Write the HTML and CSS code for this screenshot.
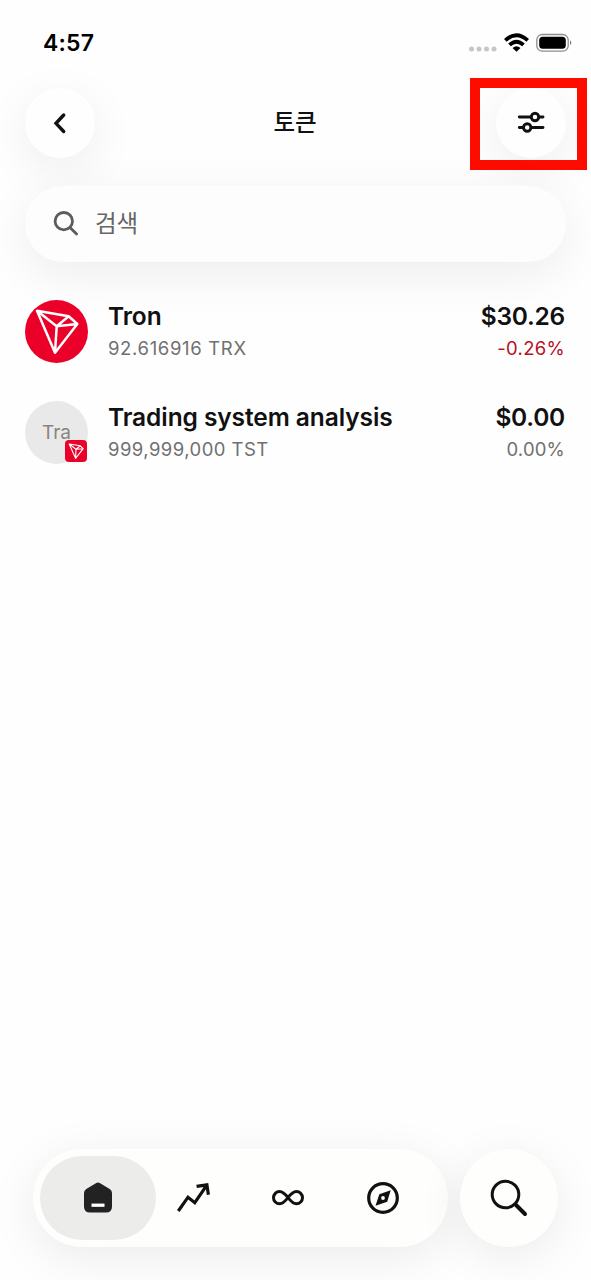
FILE: index.html
```html
<!DOCTYPE html>
<html lang="ko">
<head>
<meta charset="utf-8">
<title>토큰</title>
<link rel="stylesheet" href="styles.css">
</head>
<body>
<svg class="defs" width="0" height="0">
  <symbol id="tron" viewBox="0 0 63 63">
    <path d="M12 10.8 43.7 16.3 52.3 24 30 52.8ZM12 10.8 31.7 26.2 52.3 24M43.7 16.3 31.7 26.2 30 52.8" fill="none" stroke="#fff" stroke-width="2.5" stroke-linejoin="round"/>
  </symbol>
</svg>
<div class="screen">
  <div class="status">
    <span class="time">4:57</span>
    <svg class="status-icons" width="106" height="24" viewBox="0 0 106 24">
      <g fill="#c6c6c6"><circle cx="3.5" cy="18" r="2.5"/><circle cx="11" cy="18" r="2.5"/><circle cx="18.5" cy="18" r="2.5"/><circle cx="26" cy="18" r="2.5"/></g>
      <path d="M37.3 9.4Q48.5-1.100 59.7 9.4M41.5 13.9Q48.5 7.400 55.5 13.9" fill="none" stroke="#000" stroke-width="3.8"/>
      <path d="M44.5 17Q48.5 13.600 52.500 17L48.5 20.700Z"/>
      <rect x="68.800" y="3.500" width="31.400" height="16.700" rx="5.500" fill="none" stroke="#8d8d8d" stroke-width="1.300"/>
      <rect x="71.200" y="5.800" width="26.600" height="12" rx="3.500"/>
      <path d="M102 9.200q2.600 2.500 0 5Z" fill="#777"/>
    </svg>
  </div>
  <header class="header">
    <button class="round"><svg width="70" height="70" viewBox="0 0 70 70"><path d="M38.700 27 31 35.300 38.700 43.500" fill="none" stroke="#111" stroke-width="3.400" stroke-linecap="round"/></svg></button>
    <h1 class="heading">토큰</h1>
    <button class="round"><svg width="70" height="70" viewBox="0 0 70 70"><g fill="none" stroke="#111" stroke-width="2.900" stroke-linecap="round"><path d="M23.300 29h11.500M43.500 29h3.500M23.300 39.500h3.500M35.500 39.500h11.500"/><circle cx="39" cy="29" r="3.700"/><circle cx="31.200" cy="39.500" r="3.700"/></g></svg></button>
    <div class="highlight"></div>
  </header>
  <div class="search">
    <svg width="26" height="26" viewBox="0 0 26 26"><g fill="none" stroke="#5c5c5c" stroke-width="2.800" stroke-linecap="round"><circle cx="10.800" cy="10.200" r="8.700"/><path d="m17.200 16.700 6.400 6.400"/></g></svg>
    <span class="placeholder">검색</span>
  </div>
  <main class="list">
    <div class="row">
      <div class="coin tron"><svg width="63" height="63"><use href="#tron"/></svg></div>
      <div class="info"><div class="name">Tron</div><div class="sub s1">92.616916 TRX</div></div>
      <div class="value"><div class="name">$30.26</div><div class="sub down">-0.26%</div></div>
    </div>
    <div class="row">
      <div class="coin plain"><span class="tra">Tra</span><div class="badge"><svg width="22" height="22" viewBox="0 0 22 22"><path d="M4.200 4 15.300 5.800 18.200 8.700 10.600 18.300ZM4.200 4 11 9.300 18.200 8.700M15.300 5.800 11 9.300 10.600 18.300" fill="none" stroke="#fff" stroke-width="1.100" stroke-linejoin="round"/></svg></div></div>
      <div class="info"><div class="name">Trading system analysis</div><div class="sub s2">999,999,000 TST</div></div>
      <div class="value"><div class="name">$0.00</div><div class="sub flat">0.00%</div></div>
    </div>
  </main>
  <footer class="dock">
    <nav class="tabs">
      <div class="tab active"><svg width="34" height="34" viewBox="0 0 34 34"><path d="M15.300 1.900q1.700-1 3.400 0l10 6.100q2.300 1.500 2.300 4v13.500q0 6-6 6H9q-6 0-6-6V12q0-2.500 2.300-4Z" fill="#222"/><path d="M10.500 24.200h13" stroke="#fff" stroke-width="3.300"/></svg></div>
      <div class="tab"><svg width="36" height="34" viewBox="0 0 36 34"><path d="m3.300 30 9.700-13.800 6.800 5.500L31.500 4.700M21.600 5.300l10.300-1.500 1.500 10" fill="none" stroke="#111" stroke-width="3.200"/></svg></div>
      <div class="tab"><svg width="34" height="34" viewBox="0 0 34 34"><path d="M17 16.700C13.500 12.200 11.500 10.600 8.600 10.600a6.100 6.100 0 0 0 0 12.200C11.500 22.800 13.500 21.200 17 16.700S22.500 10.600 25.400 10.600a6.100 6.100 0 0 1 0 12.200C22.500 22.800 20.500 21.200 17 16.700Z" fill="none" stroke="#111" stroke-width="3"/></svg></div>
      <div class="tab"><svg width="34" height="34" viewBox="0 0 34 34"><circle cx="17" cy="17" r="14.300" fill="none" stroke="#111" stroke-width="3.200"/><path d="m24.700 9.300-3.500 11.500L9.500 24.700l3.800-11.500Z" fill="#111"/><circle cx="17" cy="17" r="1.900" fill="#fff"/></svg></div>
    </nav>
    <button class="find"><svg width="38" height="38" viewBox="0 0 38 38"><g fill="none" stroke="#111" stroke-linecap="round"><circle cx="15.500" cy="15.500" r="13.300" stroke-width="3"/><path d="m26 26 9 9" stroke-width="4"/></g></svg></button>
  </footer>
</div>
</body>
</html>
```
FILE: styles.css
```css
* { box-sizing: border-box; }
body { margin: 0; background: #fefefe; font-family: Inter, "Noto Sans CJK KR", sans-serif; color: #111; }
button { border: 0; padding: 0; }
svg { display: block; }
.defs { position: absolute; }
.screen { width: 591px; height: 1280px; display: flex; flex-direction: column; overflow: hidden; }
.status { height: 88px; padding: 31px 17px 0 43px; display: flex; justify-content: space-between; }
.time { font-size: 23px; font-weight: 600; line-height: 25px; letter-spacing: .2px; color: #000; }
.header { position: relative; height: 70px; padding: 0 25px; display: flex; justify-content: space-between; align-items: center; }
.round { width: 70px; height: 70px; border-radius: 50%; background: #fefefe; box-shadow: 0 12px 48px rgba(0, 0, 0, .07); }
.heading { margin: 0; padding-right: 1px; font-size: 23.5px; font-weight: 500; line-height: 70px; }
.highlight { position: absolute; left: 470px; top: -10px; width: 117px; height: 92px; border: 10px solid #ff0c00; }
.search { position: relative; margin: 28px 25px 0; height: 76px; padding-left: 28px; display: flex; align-items: center; gap: 16px; border-radius: 38px; background: #fdfdfd; box-shadow: 0 12px 48px rgba(0, 0, 0, .07); }
.placeholder { font-size: 23.5px; line-height: 76px; color: #666; }
.list { flex: 1; padding: 37.5px 26px 0 25px; display: flex; flex-direction: column; gap: 38px; }
.row { height: 63px; display: flex; }
.coin { position: relative; width: 63px; height: 63px; border-radius: 50%; flex: none; }
.tron { background: #eb0029; }
.plain { background: #e9e9e9; display: flex; align-items: center; justify-content: center; }
.tra { font-size: 19px; color: #858585; }
.badge { position: absolute; left: 40px; top: 39.5px; width: 22px; height: 22px; border-radius: 4px; background: #eb0029; }
.info { margin-left: 20px; padding-top: .5px; flex: 1; }
.value { padding-top: .5px; display: flex; flex-direction: column; align-items: flex-end; }
.name { font-size: 24.5px; font-weight: 600; line-height: 32px; letter-spacing: -.08px; white-space: nowrap; }
.value .name { letter-spacing: -.25px; }
.sub { font-size: 18.5px; line-height: 32px; letter-spacing: .2px; color: #707070; white-space: nowrap; }
.s1 { letter-spacing: .65px; }
.s2 { letter-spacing: .45px; }
.sub.down { letter-spacing: .3px; color: #b5121f; }
.dock { height: 131px; padding-left: 33px; display: flex; gap: 12px; }
.tabs { width: 415px; height: 98px; padding: 7px; display: flex; border-radius: 49px; background: #fefefd; box-shadow: 0 10px 48px rgba(0, 0, 0, .08); }
.tab { width: 95px; height: 84px; display: flex; align-items: center; justify-content: center; }
.tab.active { width: 116px; margin-right: -11px; border-radius: 42px; background: #ececeb; }
.find { width: 98px; height: 98px; display: flex; align-items: center; justify-content: center; border-radius: 50%; background: #fefefd; box-shadow: 0 10px 48px rgba(0, 0, 0, .08); }
```
